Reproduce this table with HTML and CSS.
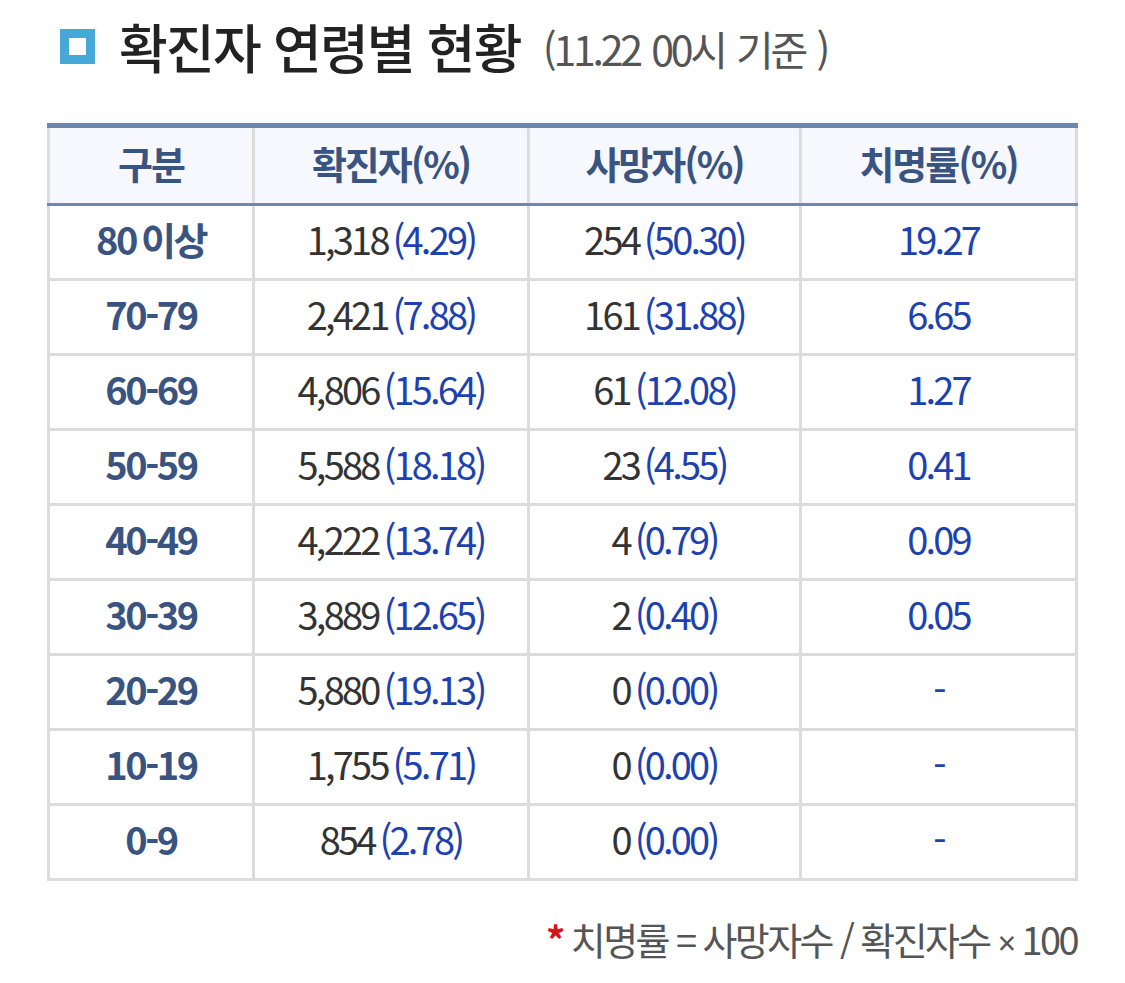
FILE: index.html
```html
<!DOCTYPE html>
<html lang="ko">
<head>
<meta charset="utf-8">
<title>확진자 연령별 현황</title>
<link rel="stylesheet" href="styles.css">
</head>
<body>
<div class="page">
  <h1 class="title">
    <span class="title-icon"></span>
    <span class="title-main">확진자 연령별 현황</span>
    <span class="title-sub">(11.22 00시 기준 )</span>
  </h1>
  <table class="stats">
    <colgroup>
      <col class="c1"><col class="c2"><col class="c3"><col class="c4">
    </colgroup>
    <thead>
      <tr><th>구분</th><th>확진자(%)</th><th>사망자(%)</th><th>치명률(%)</th></tr>
    </thead>
    <tbody>
      <tr><td class="age">80 이상</td><td>1,318 <span class="pct">(4.29)</span></td><td>254 <span class="pct">(50.30)</span></td><td class="pct">19.27</td></tr>
      <tr><td class="age">70-79</td><td>2,421 <span class="pct">(7.88)</span></td><td>161 <span class="pct">(31.88)</span></td><td class="pct">6.65</td></tr>
      <tr><td class="age">60-69</td><td>4,806 <span class="pct">(15.64)</span></td><td>61 <span class="pct">(12.08)</span></td><td class="pct">1.27</td></tr>
      <tr><td class="age">50-59</td><td>5,588 <span class="pct">(18.18)</span></td><td>23 <span class="pct">(4.55)</span></td><td class="pct">0.41</td></tr>
      <tr><td class="age">40-49</td><td>4,222 <span class="pct">(13.74)</span></td><td>4 <span class="pct">(0.79)</span></td><td class="pct">0.09</td></tr>
      <tr><td class="age">30-39</td><td>3,889 <span class="pct">(12.65)</span></td><td>2 <span class="pct">(0.40)</span></td><td class="pct">0.05</td></tr>
      <tr><td class="age">20-29</td><td>5,880 <span class="pct">(19.13)</span></td><td>0 <span class="pct">(0.00)</span></td><td class="pct">-</td></tr>
      <tr><td class="age">10-19</td><td>1,755 <span class="pct">(5.71)</span></td><td>0 <span class="pct">(0.00)</span></td><td class="pct">-</td></tr>
      <tr><td class="age">0-9</td><td>854 <span class="pct">(2.78)</span></td><td>0 <span class="pct">(0.00)</span></td><td class="pct">-</td></tr>
    </tbody>
  </table>
  <p class="note"><span class="star">*</span> 치명률 = 사망자수 / 확진자수 <span class="times">×</span> 100</p>
</div>
</body>
</html>
```
FILE: styles.css
```css
* { box-sizing: border-box; }
html, body { margin: 0; padding: 0; background: #fff; }
body {
  font-family: "Noto Sans CJK KR", "Noto Sans", sans-serif;
  color: #333;
}
.page {
  width: 1125px;
  padding: 14px 0 0 47px;
}
.title {
  display: flex;
  align-items: center;
  margin: 0;
  height: 64px;
  font-weight: 500;
}
.title-icon {
  width: 35px;
  height: 35px;
  border: 9px solid #45a8d6;
  background: #fff;
  margin-left: 13px;
  margin-right: 24px;
  flex: none;
}
.title-main {
  font-size: 53px;
  letter-spacing: -1.8px;
  color: #222;
}
.title-sub {
  font-size: 41px;
  font-weight: 400;
  letter-spacing: -3.2px;
  word-spacing: 3px;
  color: #555;
  margin-left: 22px;
  padding-top: 4px;
}
.stats {
  margin-top: 45px;
  border-collapse: collapse;
  table-layout: fixed;
  width: 1028px;
}
.c1 { width: 205px; }
.c2 { width: 275px; }
.c3 { width: 272px; }
.c4 { width: 276px; }
.stats th, .stats td {
  border: 3px solid #dcdcdc;
  text-align: center;
  vertical-align: middle;
  padding: 0 0 7px 0;
  font-size: 38px;
  letter-spacing: -2.8px;
  word-spacing: -3px;
}
.stats th {
  height: 79px;
  background: #f6f8fd;
  color: #3a5481;
  font-weight: 700;
  letter-spacing: -2px;
  border-top: 5px solid #6d87b5;
  border-bottom: 3px solid #6d87b5;
  padding: 0 0 6px 0;
}
.stats td {
  height: 75px;
  color: #333;
  font-weight: 400;
}
.stats td.age {
  color: #3a5481;
  font-weight: 700;
  letter-spacing: -2.5px;
}
.pct { color: #1d42b0; }
.stats td.pct { color: #1d42b0; }
.note {
  margin: 30px 0 0 0;
  width: 1030px;
  text-align: right;
  font-size: 38px;
  letter-spacing: -2.6px;
  color: #555;
}
.times { font-family: "Noto Sans", sans-serif; font-size: 32px; }
.star { color: #d4121b; font-weight: 700; }
```
